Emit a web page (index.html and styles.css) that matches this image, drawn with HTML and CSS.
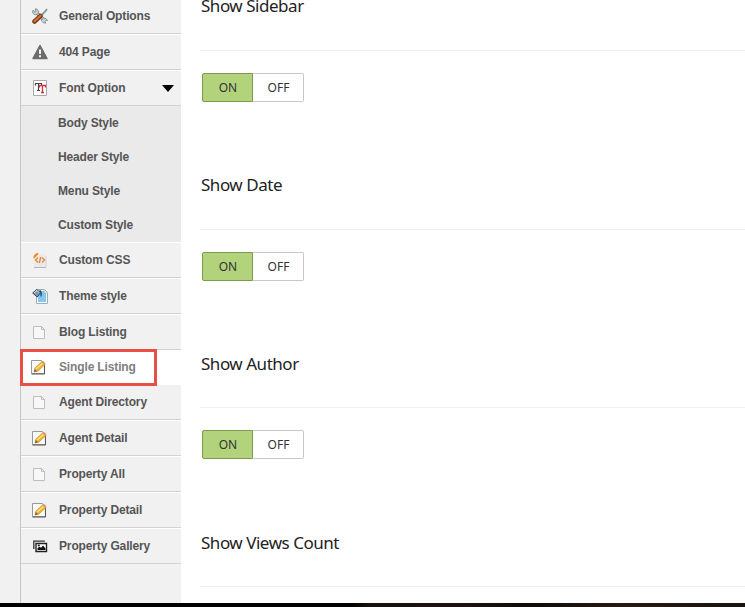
FILE: index.html
```html
<!DOCTYPE html>
<html lang="en">
<head>
<meta charset="utf-8">
<title>Theme Options</title>
<link rel="stylesheet" href="styles.css">
</head>
<body>
<svg width="0" height="0" class="defs">
  <symbol id="page" viewBox="0 0 16 16"><path d="M2.500 2.500h8l3 3v9h-11z" fill="#f8f8f8" stroke="#bdbdbd"/><path d="M10.500 2.500v3h3" fill="none" stroke="#bdbdbd"/></symbol>
  <symbol id="edit" viewBox="0 0 16 16"><path d="M1.500 1.500h10l3 3v10h-13z" fill="#fafafa" stroke="#999"/><path d="M1.500 15h13V6" fill="none" stroke="#555"/><path d="M4 13l1-4 7-6.500 3 3L8 12z" fill="#f3b72e" stroke="#c98a24" stroke-width=".7"/><path d="M6 10l7-6" stroke="#ffe28a" stroke-width="1.200"/><path d="M11.300 3.200L13 1.800l2.600 2.600-1.500 1.400z" fill="#d59b76"/><path d="M4 13l.8-3 2.200 2.200z" fill="#6b604e"/></symbol>
</svg>
<div class="app">
  <nav class="sidebar">
    <a class="item"><svg class="icon" viewBox="0 0 16 16"><path d="M3 3l10 10" stroke="#748887" stroke-width="3.200"/><path d="M3 3l10 10" stroke="#dce7e5" stroke-width="1.700"/><path d="M1 2l-.4 3L3 7l3-1 .7-2.700L4.800.8 3 1l1.300 2L3 4.500z" fill="#c9d8d6" stroke="#748887" stroke-width=".8"/><path d="M11 10l3 .5 1.500 2-1.500-.3-1 1 .6 2-2.600-.6-1.500-2z" fill="#c9d8d6" stroke="#748887" stroke-width=".8"/><path d="M9 8l4.500-5L15 1.200" stroke="#78908f" stroke-width="1.800"/><path d="M2.500 13.500l6-5.500" stroke="#813817" stroke-width="4.500" stroke-linecap="round"/><path d="M2.500 13.200l6-5.500" stroke="#d17536" stroke-width="2" stroke-linecap="round"/></svg><span>General Options</span></a>
    <a class="item"><svg class="icon" viewBox="0 0 16 16"><path d="M8 1.500l7 13H1z" fill="#6b6b6b" stroke="#6b6b6b" stroke-width="1.500" stroke-linejoin="round"/><path d="M7 5.500h2v4.500H7zM7 11.300h2v2H7z" fill="#f4f4f4"/></svg><span>404 Page</span></a>
    <a class="item"><svg class="icon" viewBox="0 0 16 16"><path d="M1.500.5h13v15h-13z" fill="#fff" stroke="#aaa"/><path d="M3.500 5.500v-2h6v2M6.500 3.500v7M5 10.500h3" fill="none" stroke="#444" stroke-width="1.200"/><path d="M7.500 7.500v-2h6v2M10.500 5.500v7M9 12.500h3" fill="none" stroke="#df3037" stroke-width="1.300"/></svg><span>Font Option</span><i class="arrow"></i></a>
    <div class="submenu">
      <a>Body Style</a><a>Header Style</a><a>Menu Style</a><a>Custom Style</a>
    </div>
    <a class="item"><svg class="icon" viewBox="0 0 16 16"><path d="M3 2h9l2 2v11H2V7z" fill="#e9e9ee"/><path d="M2 15.500h12" stroke="#b5b5bd"/><path d="M14 4v11" stroke="#d5d5da"/><path d="M1.200 6.500C1.500 3 3.500 1 6.500.7L6 2.500 2.800 6z" fill="#f18a24"/><path d="M6 5.500L3.500 8 6 10.500M10 5.500L12.500 8 10 10.500M8.800 5L7.200 11" fill="none" stroke="#ec8a35" stroke-width="1.400"/></svg><span>Custom CSS</span></a>
    <a class="item"><svg class="icon" viewBox="0 0 16 16"><path d="M4.500 1.500h8l3 3v11h-11z" fill="#fff" stroke="#9bb0bd"/><path d="M6 3h6l2 2v9H6z" fill="#83c8f5"/><path d="M12 2v3h3" fill="#eef8ff" stroke="#9bb0bd" stroke-width=".7"/><path d="M.7 5l4-3.500 4 3.300-3.500 4.200z" fill="#8297a8" stroke="#31475a"/><path d="M2 5l3-2.500 2 2" fill="none" stroke="#dce6ed"/><path d="M7.500 2.500c2 1 2 3 1.500 6" fill="none" stroke="#1f4f78" stroke-width="1.400"/></svg><span>Theme style</span></a>
    <a class="item"><svg class="icon pg"><use href="#page"/></svg><span>Blog Listing</span></a>
    <a class="item active"><svg class="icon pg"><use href="#edit"/></svg><span>Single Listing</span></a>
    <a class="item after"><svg class="icon pg"><use href="#page"/></svg><span>Agent Directory</span></a>
    <a class="item"><svg class="icon ed"><use href="#edit"/></svg><span>Agent Detail</span></a>
    <a class="item"><svg class="icon pg"><use href="#page"/></svg><span>Property All</span></a>
    <a class="item"><svg class="icon ed"><use href="#edit"/></svg><span>Property Detail</span></a>
    <a class="item"><svg class="icon" viewBox="0 0 16 16"><path d="M1.800 11V3.200h11" fill="none" stroke="#333" stroke-width="1.300"/><path d="M4 5.500h10.500v8H4z" fill="#fff" stroke="#222" stroke-width="1.400"/><path d="M5.500 12v-2l2-1.300 1.500 1L11 7.500l2.500 3V12z" fill="#111"/><circle cx="6.800" cy="7.500" r="1" fill="#111"/></svg><span>Property Gallery</span></a>
  </nav>
  <main class="content">
    <section class="option"><h3>Show Sidebar</h3><div class="switch"><label class="on">ON</label><label class="off">OFF</label></div></section>
    <section class="option"><h3>Show Date</h3><div class="switch"><label class="on">ON</label><label class="off">OFF</label></div></section>
    <section class="option short"><h3>Show Author</h3><div class="switch"><label class="on">ON</label><label class="off">OFF</label></div></section>
    <section class="option short"><h3>Show Views Count</h3></section>
  </main>
</div>
<footer class="strip"></footer>
</body>
</html>
```
FILE: styles.css
```css
*, *::after { box-sizing: border-box; }
body {
  margin: 0;
  height: 607px;
  overflow: hidden;
  display: flex;
  flex-direction: column;
  background: #fff;
  font-family: "Liberation Sans", Arial, sans-serif;
}
.defs { position: absolute; }
.app {
  display: flex;
  height: 603px;
  overflow: hidden;
  padding-left: 20px;
  background: linear-gradient(90deg, #f1f1f1 20px, #fff 20px);
}
.sidebar {
  width: 161px;
  margin-top: -2px;
  flex: none;
  height: 605px;
  background: #f1f1f1;
  border-left: 1px solid #c6c6c6;
  color: #555;
  font-size: 12px;
  font-weight: bold;
  letter-spacing: -.14px;
}
.item {
  height: 36px;
  display: flex;
  align-items: center;
  padding-left: 11px;
  border-top: 1px solid #fff;
  border-bottom: 1px solid #d2d2d2;
}
.icon { width: 16px; height: 16px; margin-right: 11px; flex: none; }
.pg { margin-left: -1px; margin-right: 12px; }
.ed { margin-left: -1px; margin-right: 12px; }
.active .icon { margin-left: -2px; margin-right: 13px; }
.item span { white-space: nowrap; }
.arrow {
  margin-left: auto;
  margin-right: 7px;
  border: 6px solid transparent;
  border-top: 7px solid #000;
  border-bottom: 0;
}
.submenu { background: #eaeaea; }
.submenu a { display: block; height: 34px; line-height: 34px; padding-left: 37px; }
.active {
  height: 35px;
  padding-bottom: 1px;
  border: 0;
  background: #fff;
  color: #808080;
  position: relative;
}
.active::after {
  content: "";
  position: absolute;
  left: -1px;
  top: -1px;
  width: 137px;
  height: 37px;
  border: 3px solid #e84f47;
}
.after { height: 35px; border-top: 0; }
.content { flex: 1; margin-left: 19px; margin-top: -8px; }
.option { height: 179px; }
.option h3 {
  margin: 0;
  height: 59px;
  padding: 2px 0 0 1px;
  border-bottom: 1px solid #efefef;
  font: 400 17px/24px "Noto Sans", sans-serif;
  letter-spacing: -.47px;
  color: #222;
}
.short h3 { height: 58px; }
.switch { display: flex; margin: 22px 0 0 2px; font: 12px/27px "Noto Sans", sans-serif; color: #333; }
.switch label { height: 29px; padding-left: 1px; text-align: center; border: 1px solid #c8c8c8; }
.switch .on { width: 51px; background: #b2d37c; border-color: #7b9c50; border-radius: 2px 0 0 2px; }
.switch .off { width: 51px; border-left: 0; border-radius: 0 2px 2px 0; }
.strip { height: 4px; background: linear-gradient(90deg, #000 350px, #17120f 370px, #1b1310 460px, #0e0b09 530px, #251a12 620px, #181410 745px); }
```
